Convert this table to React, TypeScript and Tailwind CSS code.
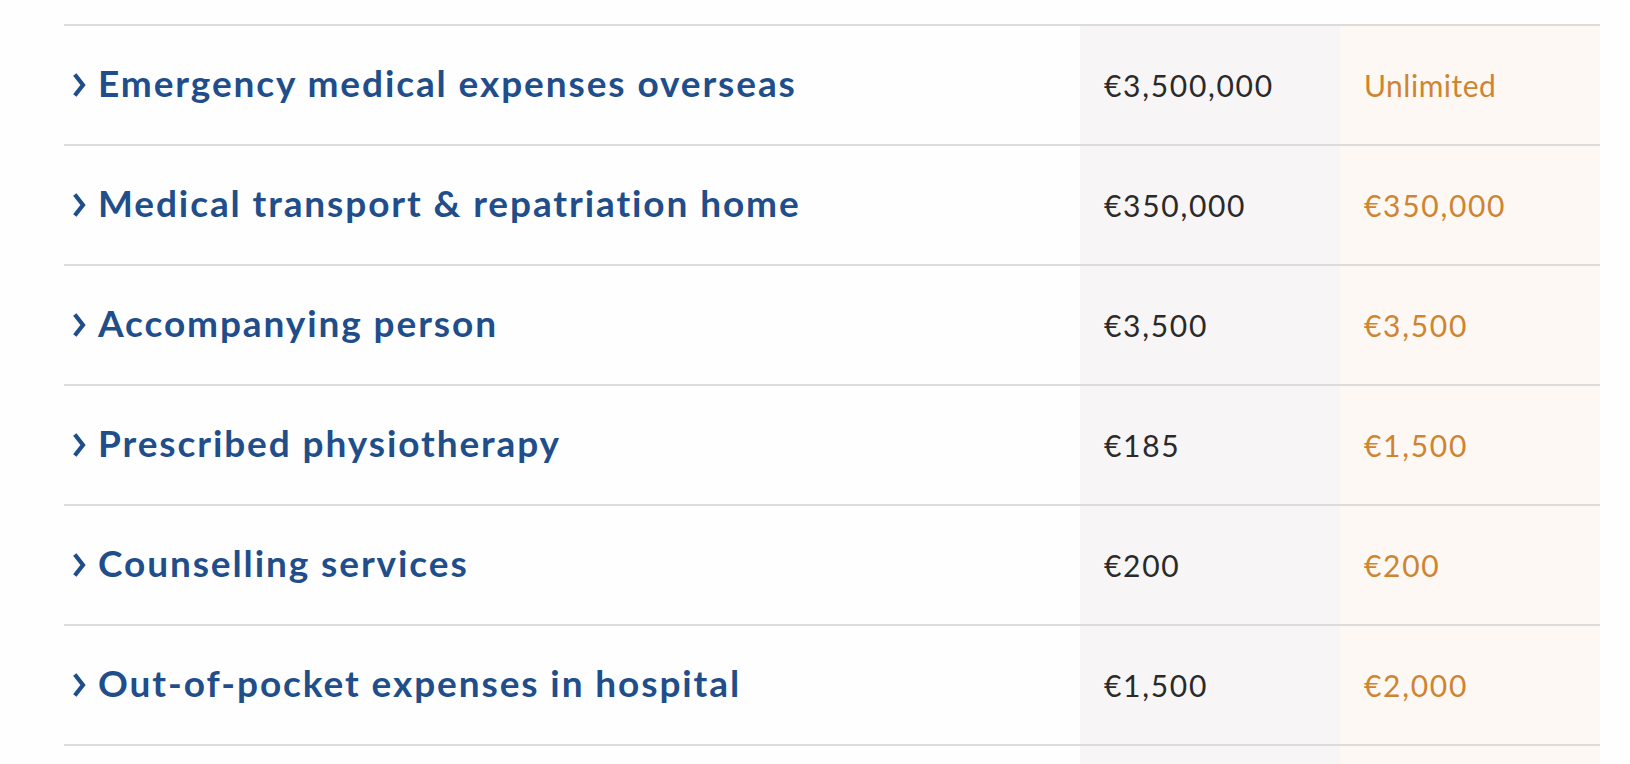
const rows = [
  { label: 'Emergency medical expenses overseas', basic: '€3,500,000', premium: 'Unlimited' },
  { label: 'Medical transport & repatriation home', basic: '€350,000', premium: '€350,000' },
  { label: 'Accompanying person', basic: '€3,500', premium: '€3,500' },
  { label: 'Prescribed physiotherapy', basic: '€185', premium: '€1,500' },
  { label: 'Counselling services', basic: '€200', premium: '€200' },
  { label: 'Out-of-pocket expenses in hospital', basic: '€1,500', premium: '€2,000' },
  { label: 'Dental emergency treatment', basic: '€500', premium: '€750' },
]

function Chevron() {
  return (
    <svg width="14" height="26" viewBox="0 0 14 26" fill="none" className="shrink-0 mt-[5px]">
      <path d="M2.8 2.5L11 13L2.8 23.5" stroke="currentColor" strokeWidth="4.2" strokeLinecap="butt" strokeLinejoin="miter" />
    </svg>
  )
}

// amounts get a little extra tracking so Lato's narrow figures read like the original
function Amount({ value }: { value: string }) {
  return <span className={value.startsWith('€') ? 'tracking-[1.7px]' : 'tracking-[0.5px]'}>{value}</span>
}

export default function App() {
  return (
    <div className="min-h-screen bg-[#fefefe] pt-6 pl-16 pr-[30px] font-['Lato','Liberation_Sans',sans-serif]">
      <div className="w-full">
        {rows.map((row) => (
          <div
            key={row.label}
            className="grid grid-cols-[1fr_260px_260px] h-[120px] border-t-2 border-[#dcdcdc]"
          >
            {/* Cover label */}
            <button className="flex items-center gap-3 pl-2 pb-[6px] text-left text-[#1f4e8b]">
              <Chevron />
              <span className="text-[37px] font-bold leading-none tracking-[1.9px]">{row.label}</span>
            </button>

            {/* Basic plan */}
            <div className="flex items-center bg-[#f7f5f6] pl-6 text-[30px] leading-none text-[#2a2a2a]">
              <Amount value={row.basic} />
            </div>

            {/* Premium plan */}
            <div className="flex items-center bg-[#fdf8f3] pl-6 text-[30px] leading-none text-[#cf8432]">
              <Amount value={row.premium} />
            </div>
          </div>
        ))}
      </div>
    </div>
  )
}
